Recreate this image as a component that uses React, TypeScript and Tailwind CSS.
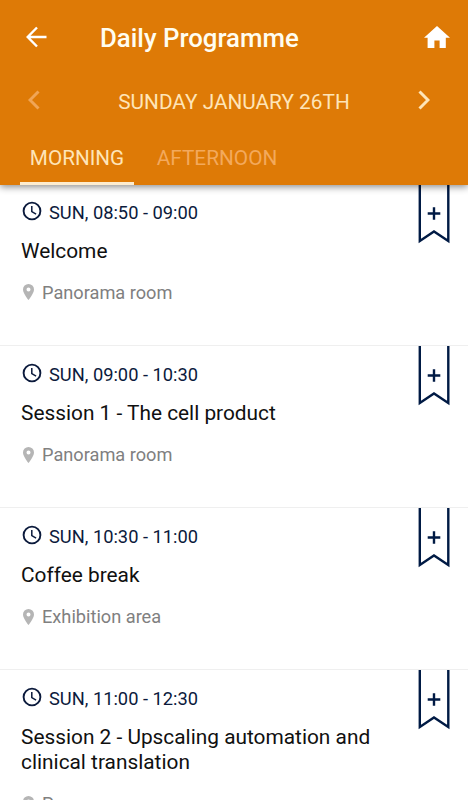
type Session = {
  time: string;
  title: string;
  room: string;
};

const sessions: Session[] = [
  { time: "SUN, 08:50 - 09:00", title: "Welcome", room: "Panorama room" },
  { time: "SUN, 09:00 - 10:30", title: "Session 1 - The cell product", room: "Panorama room" },
  { time: "SUN, 10:30 - 11:00", title: "Coffee break", room: "Exhibition area" },
  {
    time: "SUN, 11:00 - 12:30",
    title: "Session 2 - Upscaling automation and clinical translation",
    room: "Panorama room",
  },
];

function BackIcon() {
  return (
    <svg width="22" height="22" viewBox="0 0 22 22" fill="none" stroke="currentColor" strokeWidth="2.4">
      <path d="M20.5 11H2M11 1.5L1.7 11l9.3 9.5" />
    </svg>
  );
}

function HomeIcon() {
  return (
    <svg width="26" height="22" viewBox="0 0 26 22" fill="currentColor">
      <path d="M10.4 22v-7.6h5.2V22h6.2V11.8H26L13 0 0 11.8h3.6V22z" />
    </svg>
  );
}

function Chevron({ flip }: { flip?: boolean }) {
  return (
    <svg
      width="12"
      height="20"
      viewBox="0 0 12 20"
      fill="none"
      stroke="currentColor"
      strokeWidth="3"
      className={flip ? "-scale-x-100" : ""}
    >
      <path d="M1.5 1.5L10 10l-8.5 8.5" />
    </svg>
  );
}

function ClockIcon() {
  return (
    <svg className="mb-[2px]" width="20" height="20" viewBox="0 0 20 20" fill="none" stroke="currentColor">
      <circle cx="10" cy="10" r="8.4" strokeWidth="1.9" />
      <path d="M9.8 5v5.6l4.3 2.5" strokeWidth="1.5" />
    </svg>
  );
}

function PinIcon() {
  return (
    <svg width="11" height="16" viewBox="0 0 11 16" fill="#b5b5b5">
      <path
        fillRule="evenodd"
        d="M5.5 0A5.5 5.5 0 0 0 0 5.5C0 9.6 5.5 16 5.5 16S11 9.6 11 5.5A5.5 5.5 0 0 0 5.5 0zm0 7.5a2 2 0 1 1 0-4 2 2 0 0 1 0 4z"
      />
    </svg>
  );
}

function BookmarkIcon() {
  return (
    <svg width="32" height="60" viewBox="0 0 32 60" fill="none" stroke="#001a44" strokeWidth="2.4">
      <path d="M1.8 0v56.9L16 47.4l14.3 9.5V0" />
      <path d="M9.7 29.5h12.6M16 23.2v12.6" />
    </svg>
  );
}

function SessionRow({ session }: { session: Session }) {
  return (
    <li className="relative h-[162.25px] shrink-0 border-b border-[#efefef] pt-[16px] pl-[21px] last:h-auto">
      <div className="flex h-6 items-center gap-[7px] pl-[1px] text-[#0b1a3c]">
        <ClockIcon />
        <span className="pt-[1.5px] text-[18.3px]">{session.time}</span>
      </div>
      <h2 className="mt-[15px] w-[370px] text-[20.85px] leading-[24.5px] text-[#101010]">{session.title}</h2>
      <div className="mt-[17.25px] flex h-6 items-center gap-[8px] pl-[2px] text-[#808080]">
        <PinIcon />
        <span className="text-[18.2px]">{session.room}</span>
      </div>
      <button className="absolute top-0 right-[18px]">
        <BookmarkIcon />
      </button>
    </li>
  );
}

export default function App() {
  return (
    <main className="flex h-[800px] w-[468px] flex-col overflow-hidden bg-white font-['Roboto',sans-serif]">
      <header className="z-10 flex h-[185px] shrink-0 flex-col bg-[#de7a06] shadow-[0_2px_7px_rgba(0,0,0,0.45)]">
        <div className="flex h-[74px] items-center pr-[18px] pl-[26px] text-white">
          <BackIcon />
          <h1 className="ml-[52px] flex-1 pt-[2px] text-[25.8px] font-medium text-[#fffdf0]">Daily Programme</h1>
          <HomeIcon />
        </div>
        <div className="flex h-[52px] items-center justify-between pr-[38px] pl-[28px] text-[#fee5b8]">
          <span className="text-[#f0a556]">
            <Chevron flip />
          </span>
          <span className="pt-[6px] pl-[10px] text-[20.8px]">SUNDAY JANUARY 26TH</span>
          <Chevron />
        </div>
        <nav className="flex flex-1 pl-[20px]">
          <button className="h-[59px] w-[114px] border-b-[3px] border-[#fdeccf] pt-[9px] text-[20.7px] text-[#fee5b8]">
            MORNING
          </button>
          <button className="h-[59px] w-[166px] pt-[6px] text-[20.8px] text-[#f3a95c]">AFTERNOON</button>
        </nav>
      </header>
      <ul className="-mt-[1.5px] flex flex-col">
        {sessions.map((s) => (
          <SessionRow key={s.time} session={s} />
        ))}
      </ul>
    </main>
  );
}
